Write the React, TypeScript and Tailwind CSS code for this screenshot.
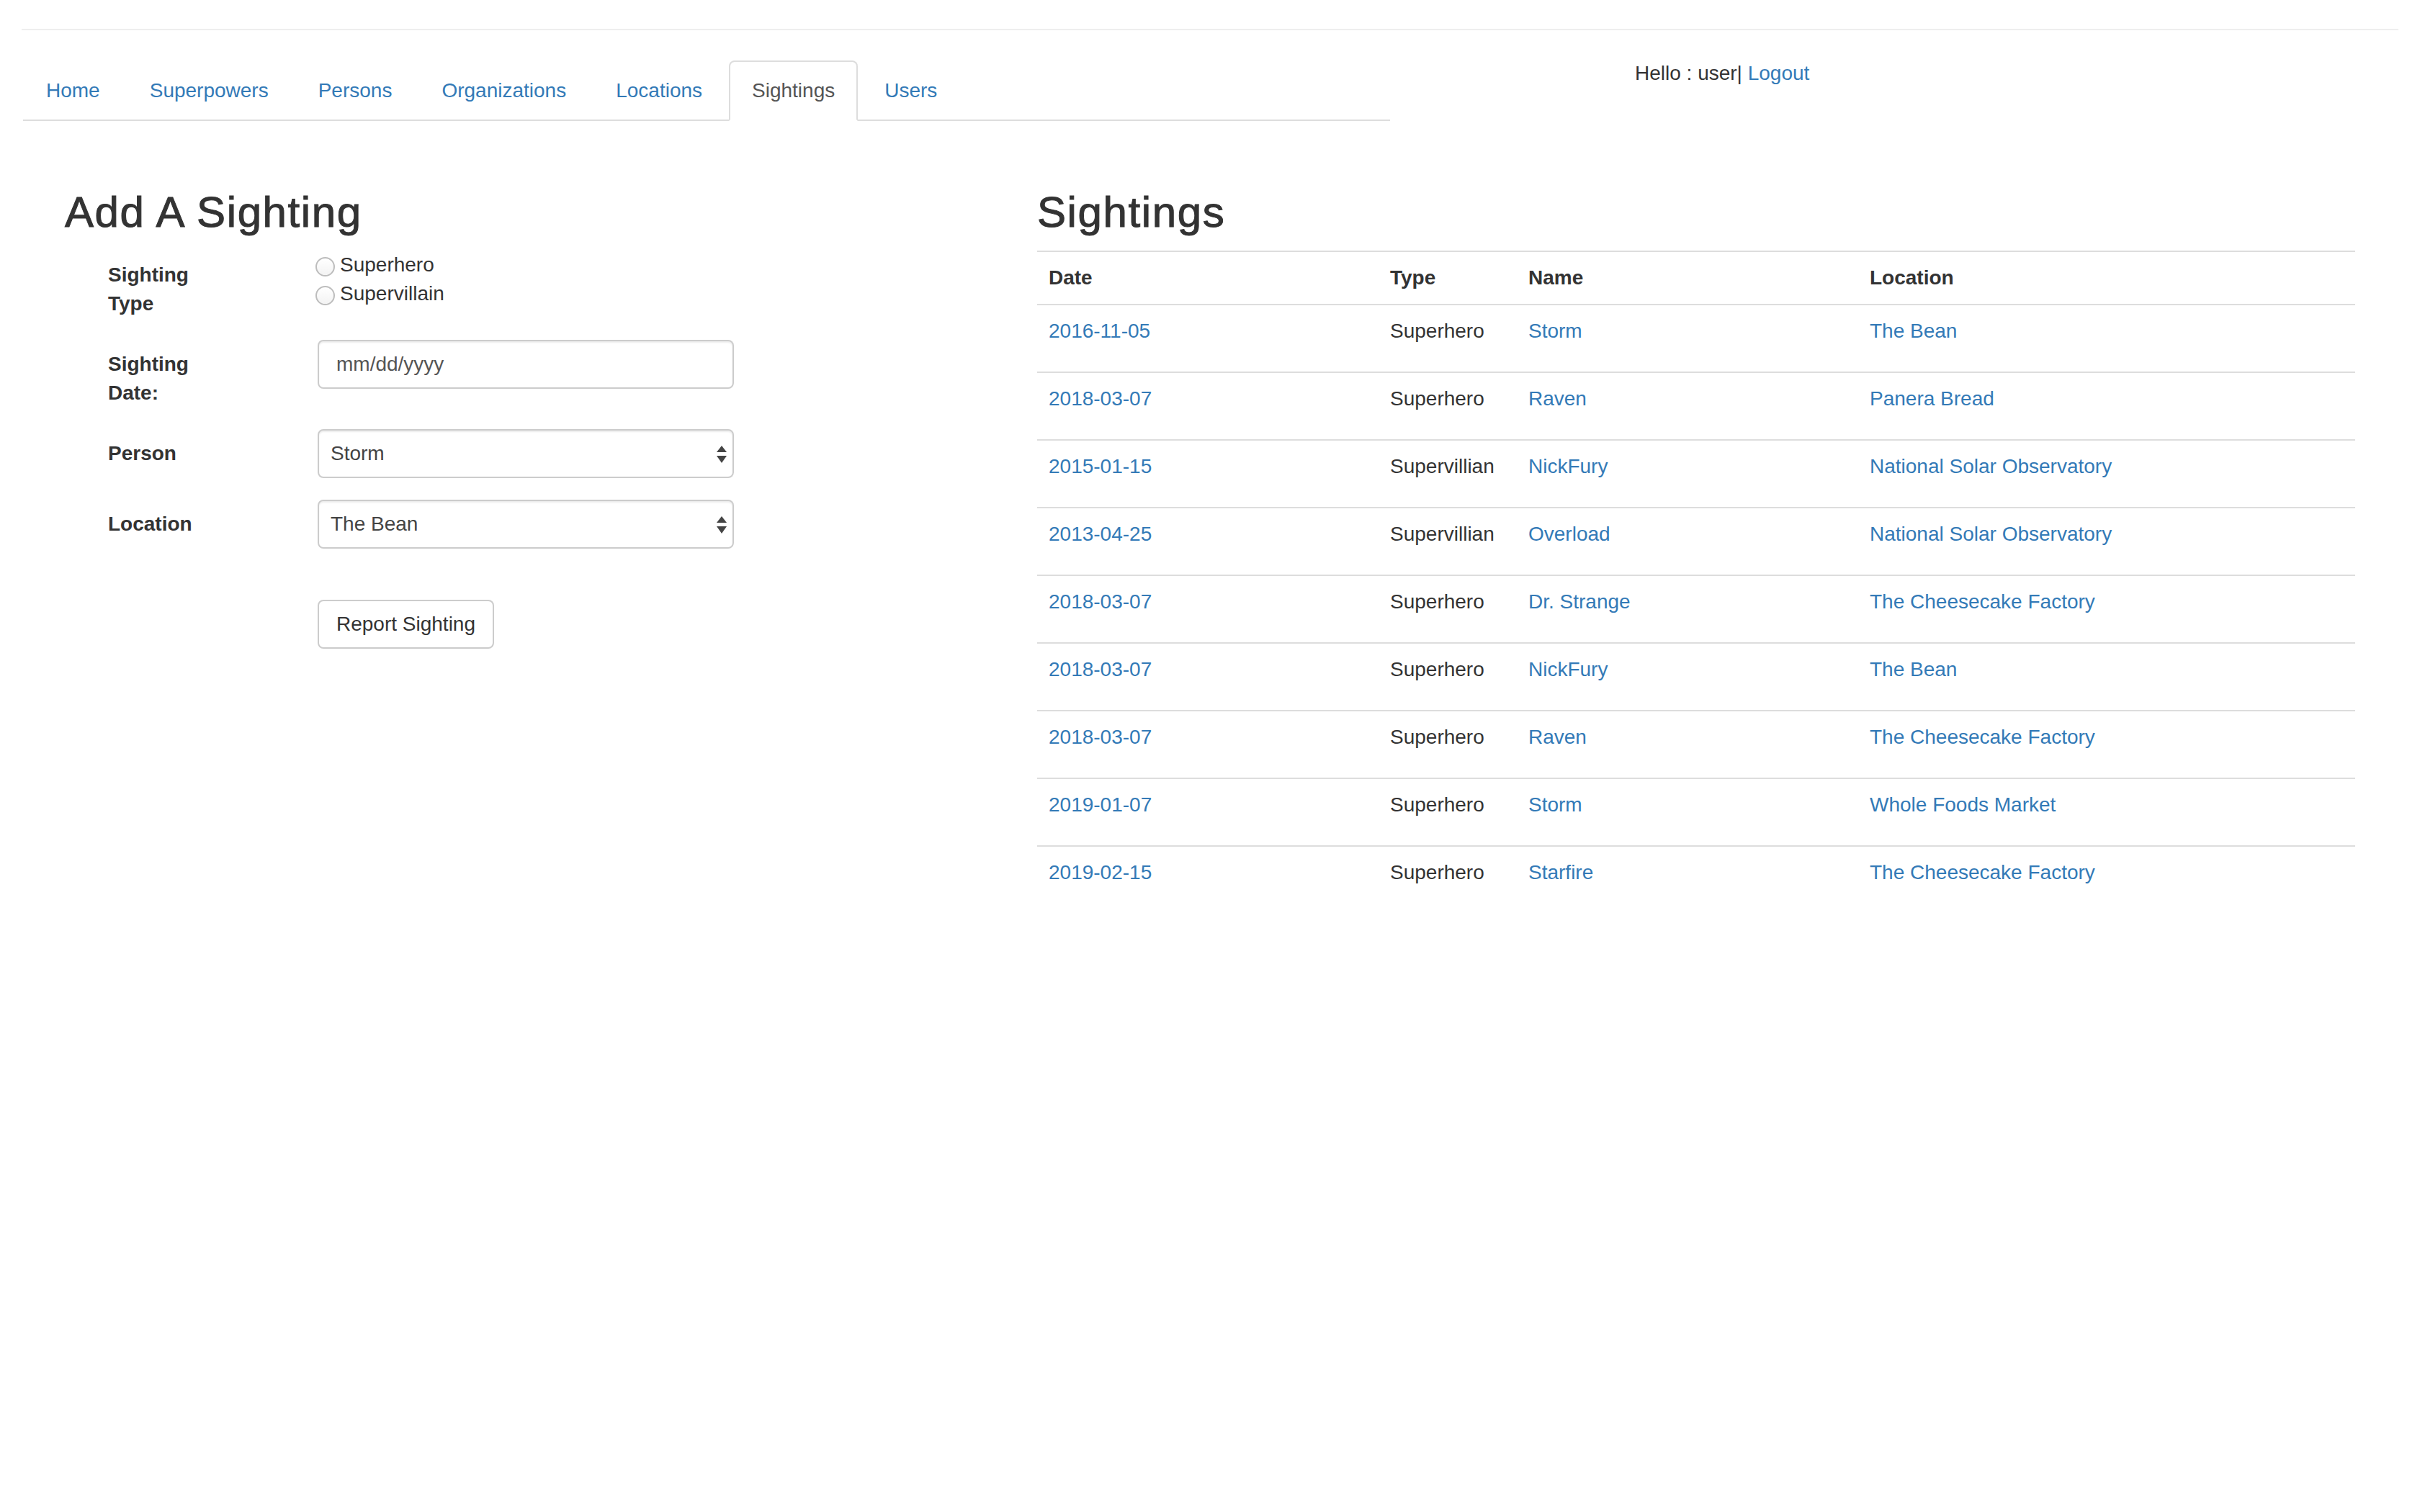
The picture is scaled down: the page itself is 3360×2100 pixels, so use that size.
const tabs = ['Home', 'Superpowers', 'Persons', 'Organizations', 'Locations', 'Sightings', 'Users'];

const sightings = [
  { date: '2016-11-05', type: 'Superhero', name: 'Storm', location: 'The Bean' },
  { date: '2018-03-07', type: 'Superhero', name: 'Raven', location: 'Panera Bread' },
  { date: '2015-01-15', type: 'Supervillian', name: 'NickFury', location: 'National Solar Observatory' },
  { date: '2013-04-25', type: 'Supervillian', name: 'Overload', location: 'National Solar Observatory' },
  { date: '2018-03-07', type: 'Superhero', name: 'Dr. Strange', location: 'The Cheesecake Factory' },
  { date: '2018-03-07', type: 'Superhero', name: 'NickFury', location: 'The Bean' },
  { date: '2018-03-07', type: 'Superhero', name: 'Raven', location: 'The Cheesecake Factory' },
  { date: '2019-01-07', type: 'Superhero', name: 'Storm', location: 'Whole Foods Market' },
  { date: '2019-02-15', type: 'Superhero', name: 'Starfire', location: 'The Cheesecake Factory' },
];

const Arrows = () => (
  <svg width="14" height="24" viewBox="0 0 14 24" className="mt-[2px]">
    <polygon points="7,0 14,9 0,9" fill="#444" />
    <polygon points="0,14 14,14 7,24" fill="#444" />
  </svg>
);

const Radio = ({ label }: { label: string }) => (
  <div className="flex items-center">
    <span className="ml-[-3px] mt-[4px] h-[27px] w-[27px] rounded-full border-2 border-[#bdbdbd] bg-gradient-to-b from-white to-[#f3f3f3]"></span>
    <span className="ml-[7px]">{label}</span>
  </div>
);

const FakeSelect = ({ value }: { value: string }) => (
  <div className="flex h-[68px] w-[578px] items-center justify-between rounded-[8px] border-2 border-[#ccc] pl-[16px] pr-[8px] text-[#444] shadow-[inset_0_2px_2px_rgba(0,0,0,0.075)]">
    <span>{value}</span>
    <Arrows />
  </div>
);

const Label = ({ children }: { children: React.ReactNode }) => (
  <div className="w-[351px] shrink-0 pl-[60px] pt-[14px] font-bold">
    <div className="w-[165px]">{children}</div>
  </div>
);

const App = () => {
  return (
    <div className="min-h-screen bg-white px-[30px] font-['Liberation_Sans',Arial,sans-serif] text-[28px] leading-[40px] text-[#333]">
      <div className="pt-[40px]">
        <div className="h-[2px] w-full bg-[#eee]"></div>
      </div>

      <div className="mt-[40px] flex">
        <div className="ml-[2px] w-[1898px] pt-[2px]">
          <ul className="flex border-b-2 border-[#ddd]">
            {tabs.map((t) => (
              <li key={t} className="mb-[-2px] mr-[5px]">
                {t === 'Sightings' ? (
                  <a className="block rounded-t-[8px] border-2 border-[#ddd] border-b-transparent bg-white px-[30px] py-[20px] text-[#555]">
                    {t}
                  </a>
                ) : (
                  <a className="block rounded-t-[8px] border-2 border-transparent px-[30px] py-[20px] text-[#337ab7]">
                    {t}
                  </a>
                )}
              </li>
            ))}
          </ul>
        </div>
        <div className="ml-[340px]">
          Hello : user| <a className="text-[#337ab7]">Logout</a>
        </div>
      </div>

      <div className="mt-[54px] flex pl-[60px]">
        {/* add form */}
        <div className="w-[1290px] shrink-0">
          <h2 className="mb-[20px] mt-[40px] text-[60px] leading-[66px] tracking-[1.6px] [-webkit-text-stroke:1px_#333]">
            Add A Sighting
          </h2>

          <div className="mb-[30px] flex">
            <Label>Sighting Type</Label>
            <div>
              <Radio label="Superhero" />
              <Radio label="Supervillain" />
            </div>
          </div>

          <div className="mb-[30px] flex">
            <Label>Sighting Date:</Label>
            <div className="flex h-[68px] w-[578px] items-center rounded-[8px] border-2 border-[#ccc] px-[24px] text-[#555] shadow-[inset_0_2px_2px_rgba(0,0,0,0.075)]">
              mm/dd/yyyy
            </div>
          </div>

          <div className="mb-[30px] flex">
            <Label>Person</Label>
            <FakeSelect value="Storm" />
          </div>

          <div className="flex">
            <Label>Location</Label>
            <FakeSelect value="The Bean" />
          </div>

          <div className="mt-[71px] flex">
            <div className="w-[351px] shrink-0"></div>
            <button className="rounded-[8px] border-2 border-[#ccc] bg-white px-[24px] py-[12px] text-[28px] leading-[40px] text-[#333]">
              Report Sighting
            </button>
          </div>
        </div>

        {/* list */}
        <div className="ml-[60px] w-[1830px] shrink-0">
          <h2 className="mb-[20px] mt-[40px] text-[60px] leading-[66px] tracking-[1.6px] [-webkit-text-stroke:1px_#333]">
            Sightings
          </h2>
          <table className="w-full table-fixed border-collapse">
            <tbody>
              <tr>
                <th className="w-[474px] border-t-2 border-[#ddd] p-[16px] text-left align-top font-bold">Date</th>
                <th className="w-[192px] border-t-2 border-[#ddd] p-[16px] text-left align-top font-bold">Type</th>
                <th className="w-[474px] border-t-2 border-[#ddd] p-[16px] text-left align-top font-bold">Name</th>
                <th className="border-t-2 border-[#ddd] p-[16px] text-left align-top font-bold">Location</th>
              </tr>
              {sightings.map((s, i) => (
                <tr key={i}>
                  <td className="border-t-2 border-[#ddd] px-[16px] pb-[36px] pt-[16px] align-top">
                    <a className="text-[#337ab7]">{s.date}</a>
                  </td>
                  <td className="border-t-2 border-[#ddd] px-[16px] pb-[36px] pt-[16px] align-top">{s.type}</td>
                  <td className="border-t-2 border-[#ddd] px-[16px] pb-[36px] pt-[16px] align-top">
                    <a className="text-[#337ab7]">{s.name}</a>
                  </td>
                  <td className="border-t-2 border-[#ddd] px-[16px] pb-[36px] pt-[16px] align-top">
                    <a className="text-[#337ab7]">{s.location}</a>
                  </td>
                </tr>
              ))}
            </tbody>
          </table>
        </div>
      </div>
    </div>
  );
};

export default App;
